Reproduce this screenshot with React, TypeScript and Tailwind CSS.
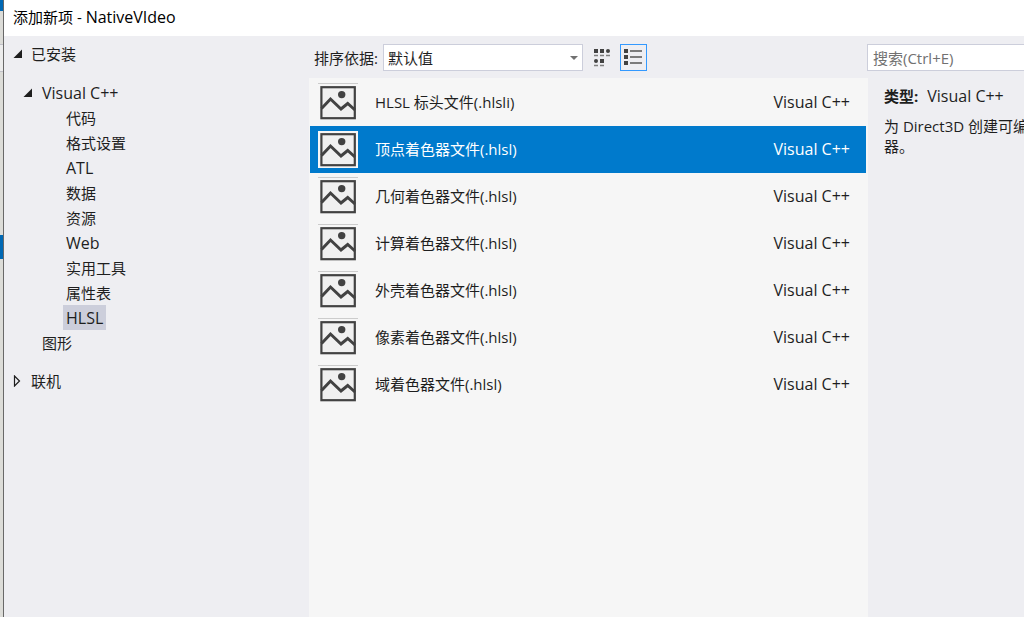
import React, { useState } from 'react';

const categories = ['代码', '格式设置', 'ATL', '数据', '资源', 'Web', '实用工具', '属性表', 'HLSL'];

const templates = [
  'HLSL 标头文件(.hlsli)',
  '顶点着色器文件(.hlsl)',
  '几何着色器文件(.hlsl)',
  '计算着色器文件(.hlsl)',
  '外壳着色器文件(.hlsl)',
  '像素着色器文件(.hlsl)',
  '域着色器文件(.hlsl)',
];

const ExpandedArrow = () => (
  <svg width="10" height="10" viewBox="0 0 10 10" className="shrink-0">
    <path d="M9 0.5v8.5H0.5z" fill="#1e1e1e" />
  </svg>
);

const CollapsedArrow = () => (
  <svg width="10" height="12" viewBox="0 0 10 12" className="shrink-0">
    <path d="M1.5 1v10L6.5 6z" fill="none" stroke="#1e1e1e" strokeWidth="1.2" />
  </svg>
);

const PictureIcon = ({ selected }: { selected: boolean }) => (
  <svg width="40" height="37" viewBox="0 0 40 37" className="block">
    {selected && <rect width="40" height="37" fill="#f6f6f6" />}
    <rect x="3.4" y="3.2" width="33.4" height="31" fill="#f0f0f0" stroke="#424242" strokeWidth="2.2" />
    <path d="M3.5 24.5 12.5 15 23 25 29.7 19.5 37 26" fill="none" stroke="#424242" strokeWidth="3" />
    <circle cx="23.7" cy="10.6" r="3.7" fill="#424242" />
  </svg>
);

const MediumIconsIcon = () => (
  <svg width="18" height="19" viewBox="0 0 18 19" className="block">
    <g fill="#424242">
      <path d="M1 1h4v4H1zM7 1h4v4H7zM7 11h4v4H7z" />
      <circle cx="15" cy="3" r="2" />
      <circle cx="3" cy="13" r="2" />
    </g>
    <path d="M1 7.5h4M7 7.5h4M13 7.5h4M1 17.5h4M7 17.5h4" stroke="#808080" strokeWidth="1.4" />
  </svg>
);

const ListIcon = () => (
  <svg width="19" height="18" viewBox="0 0 19 18" className="block">
    <path d="M0 1h4v4H0zM0 7h4v4H0zM0 13h4v4H0z" fill="#424242" />
    <path d="M6 3h12M6 9h12M6 15h12" stroke="#555555" strokeWidth="1.4" />
  </svg>
);

const App: React.FC = () => {
  const [category, setCategory] = useState('HLSL');
  const [selected, setSelected] = useState(1);
  const [view, setView] = useState('list');

  return (
    <div className="flex h-screen overflow-hidden bg-[#eeeef2] text-[15px] leading-5 text-[#1e1e1e] font-['Open_Sans','Noto_Sans_CJK_SC',sans-serif]">
      {/* Editor window behind the dialog */}
      <div className="flex w-1 shrink-0 flex-col border-r border-[#686868] bg-[#dcdcd8]">
        <div className="h-[11px] bg-[#0068b4]" />
        <div className="h-[34px] border-b border-[#c0c0c8]" />
        <div className="h-[27px] border-b border-[#c0c0c8] bg-[#ececec]" />
        <div className="h-[163px]" />
        <div className="h-6 bg-[#0068b4]" />
      </div>

      <div className="flex min-w-0 flex-1 flex-col">
        <header className="flex h-9 shrink-0 items-center bg-white px-[9px] pb-[2px] text-black">
          <h1>
            添加新项 - <span className="text-base leading-5">NativeVIdeo</span>
          </h1>
        </header>

        <div className="flex min-h-0 flex-1">
          {/* Category tree */}
          <nav className="flex w-[305px] shrink-0 flex-col items-start pt-[5px]">
            <button type="button" className="flex h-[25px] items-center gap-2 pl-[9px]">
              <ExpandedArrow />
              已安装
            </button>
            <button type="button" className="mt-[14px] flex h-[25px] items-center gap-[9px] pl-[19px]">
              <ExpandedArrow />
              <span className="text-base leading-5">Visual C++</span>
            </button>
            {categories.map((name) => (
              <button
                key={name}
                type="button"
                onClick={() => setCategory(name)}
                className={`ml-[59px] flex h-[25px] items-center px-[3px] ${/^[A-Z]/.test(name) ? 'text-base leading-5' : ''} ${category === name ? 'bg-[#cccedb]' : ''}`}
              >
                {name}
              </button>
            ))}
            <button type="button" className="flex h-[25px] items-center pl-[38px]">图形</button>
            <button type="button" className="mt-[13px] flex h-[25px] items-center gap-2 pl-[9px]">
              <CollapsedArrow />
              联机
            </button>
          </nav>

          {/* Template list */}
          <main className="flex min-w-0 flex-1 flex-col">
            <div className="flex h-[42px] shrink-0 items-center pl-[5px] pt-px">
              <label htmlFor="sort" className="w-[69px] whitespace-nowrap">排序依据:</label>
              <div className="relative w-[200px]">
                <select
                  id="sort"
                  className="block h-[27px] w-full appearance-none border border-[#cccedb] bg-white pl-1 pr-5 outline-none"
                >
                  <option>默认值</option>
                </select>
                <svg width="8" height="4" viewBox="0 0 8 4" className="pointer-events-none absolute right-[5px] top-3">
                  <path d="M0 0h8L4 4z" fill="#717171" />
                </svg>
              </div>
              <button
                type="button"
                aria-label="中等图标"
                onClick={() => setView('icons')}
                className={`ml-[5px] flex h-[27px] w-[27px] items-center justify-center border ${view === 'icons' ? 'border-[#3399ff]' : 'border-transparent'}`}
              >
                <MediumIconsIcon />
              </button>
              <button
                type="button"
                aria-label="小图标"
                onClick={() => setView('list')}
                className={`ml-[5px] flex h-[27px] w-[27px] items-start border pl-[3px] pt-[3px] ${view === 'list' ? 'border-[#3399ff]' : 'border-transparent'}`}
              >
                <ListIcon />
              </button>
            </div>

            <div className="flex-1 bg-[#f6f6f6] py-px pl-px pr-[2px]">
              {templates.map((name, i) => (
                <button
                  key={name}
                  type="button"
                  onClick={() => setSelected(i)}
                  className={`flex h-[47px] w-full items-start pl-2 pr-4 text-left ${selected === i ? 'bg-[#007acc] text-white' : ''}`}
                >
                  <span className={`mt-1 border-t ${selected === i ? 'border-transparent' : 'border-[#cccccc]'}`}>
                    <PictureIcon selected={selected === i} />
                  </span>
                  <span className="ml-[17px] flex-1 self-center pb-[2px]">{name}</span>
                  <span className="self-center pb-[2px] text-base leading-5">Visual C++</span>
                </button>
              ))}
            </div>
          </main>

          {/* Description */}
          <aside className="w-[156px] shrink-0">
            <div className="-ml-px flex h-[42px] items-center pt-px">
              <input
                type="text"
                aria-label="搜索"
                placeholder="搜索(Ctrl+E)"
                className="h-[27px] w-full flex-1 border border-r-0 border-[#cccedb] bg-white px-[5px] outline-none placeholder:text-[#717171]"
              />
            </div>
            <div className="whitespace-nowrap pl-4 pt-2">
              <p>
                <strong className="mr-[9px] font-bold">类型:</strong>
                <span className="text-base leading-5">Visual C++</span>
              </p>
              <p className="mt-[10px]">
                为 Direct3D 创建可编
                <br />
                器。
              </p>
            </div>
          </aside>
        </div>
      </div>
    </div>
  );
};

export default App;
